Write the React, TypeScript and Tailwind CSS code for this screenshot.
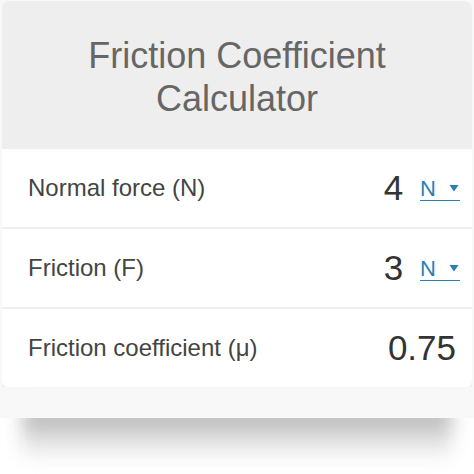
import React from 'react'

interface Row {
  label: string
  value: string
  unit?: string
}

const rows: Row[] = [
  { label: 'Normal force (N)', value: '4', unit: 'N' },
  { label: 'Friction (F)', value: '3', unit: 'N' },
  { label: 'Friction coefficient (μ)', value: '0.75' },
]

function UnitSelect({ unit }: { unit: string }) {
  return (
    <span className="ml-[17px] mt-[2px] flex items-center border-b-[1.5px] border-[#2a7fb8] text-[22px] leading-[22px] text-[#2a7fb8]">
      <span>{unit}</span>
      <svg width="10" height="8" viewBox="0 0 10 8" className="ml-[13px] mr-[1px] mb-[2px]">
        <path d="M0.5 1 L9.5 1 L5 7.5 Z" fill="#2a7fb8" />
      </svg>
    </span>
  )
}

export default function App() {
  return (
    <div
      className="w-[474px] h-[474px] overflow-hidden bg-white"
      style={{ fontFamily: '"Liberation Sans", Arial, sans-serif' }}
    >
      <div className="px-[2px] pt-[1px] bg-[#f8f8f8]">
        {/* Header */}
        <div className="h-[148px] rounded-t-[8px] bg-[#eeeeee] flex flex-col items-center justify-center text-[36px] leading-[43px] text-[#666666] pt-[4px]">
          <div>Friction Coefficient</div>
          <div>Calculator</div>
        </div>

        {/* Rows */}
        <div className="flex flex-col gap-[2px] bg-[#efefef]">
          {rows.map((row, i) => (
            <div
              key={row.label}
              className={`h-[78px] bg-white flex items-center justify-between pl-[26px] pr-[12px] ${
                i === rows.length - 1 ? 'rounded-b-[6px]' : ''
              }`}
            >
              <span className="text-[24px] text-[#444444]">{row.label}</span>
              <div className="flex items-center">
                <span className={`text-[35px] text-[#333333] ${row.unit ? '' : 'mr-[4px]'}`}>{row.value}</span>
                {row.unit && <UnitSelect unit={row.unit} />}
              </div>
            </div>
          ))}
        </div>
      </div>

      {/* Bottom band */}
      <div className="relative z-10 h-[31px] bg-[#f8f8f8]" />

      {/* Drop shadow under the widget */}
      <div className="-mt-[10px] mx-[22px] h-[54px] bg-gradient-to-b from-[#a8a8a8] via-[#dadada] to-white blur-[9px]" />
    </div>
  )
}
